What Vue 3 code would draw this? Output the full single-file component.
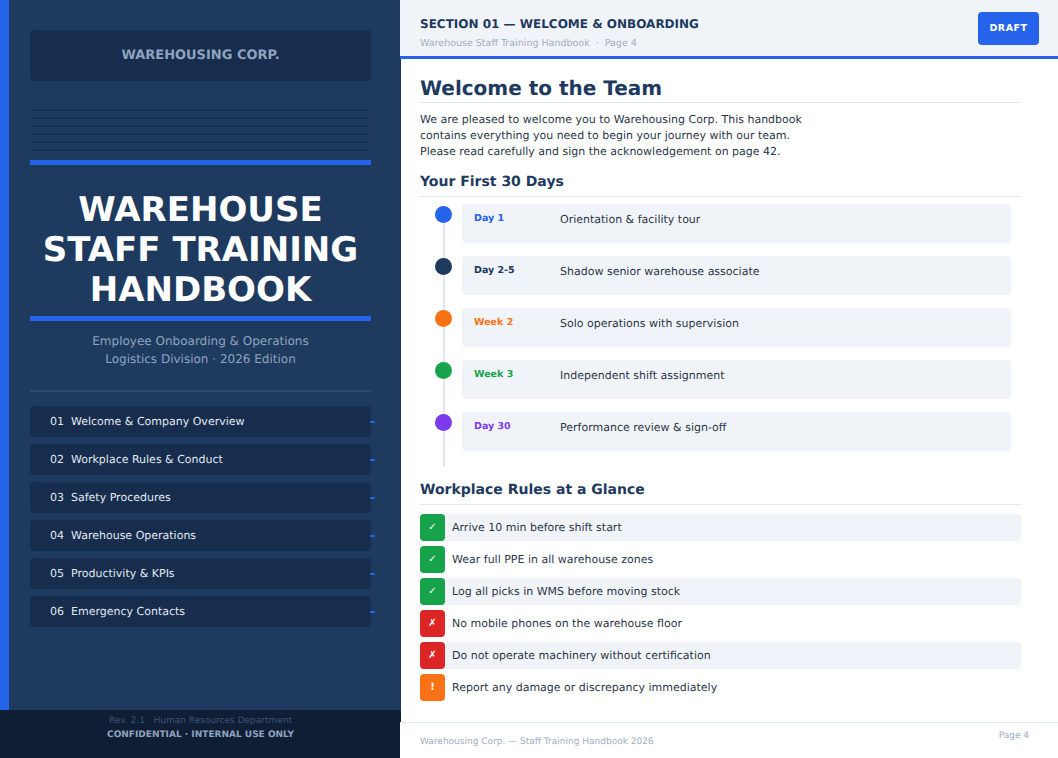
<script setup>
const lines = [1, 2, 3, 4, 5, 6]
const nav = [
  ['01', 'Welcome & Company Overview'],
  ['02', 'Workplace Rules & Conduct'],
  ['03', 'Safety Procedures'],
  ['04', 'Warehouse Operations'],
  ['05', 'Productivity & KPIs'],
  ['06', 'Emergency Contacts'],
]
const days = [
  { when: 'Day 1', what: 'Orientation & facility tour', tone: 'blue' },
  { when: 'Day 2-5', what: 'Shadow senior warehouse associate', tone: 'navy' },
  { when: 'Week 2', what: 'Solo operations with supervision', tone: 'orange' },
  { when: 'Week 3', what: 'Independent shift assignment', tone: 'green' },
  { when: 'Day 30', what: 'Performance review & sign-off', tone: 'purple' },
]
const rules = [
  { mark: '✓', text: 'Arrive 10 min before shift start', tone: 'green' },
  { mark: '✓', text: 'Wear full PPE in all warehouse zones', tone: 'green' },
  { mark: '✓', text: 'Log all picks in WMS before moving stock', tone: 'green' },
  { mark: '✗', text: 'No mobile phones on the warehouse floor', tone: 'red' },
  { mark: '✗', text: 'Do not operate machinery without certification', tone: 'red' },
  { mark: '!', text: 'Report any damage or discrepancy immediately', tone: 'orange' },
]
</script>

<template>
  <div class="page">
    <aside class="cover">
      <div class="cover-top">
        <div class="stripe"></div>
        <div class="cover-body">
          <div class="logo">WAREHOUSING CORP.</div>
          <div class="rack">
            <div v-for="l in lines" :key="l" class="rack-line"></div>
          </div>
          <div class="bar"></div>
          <h1 class="title">WAREHOUSE<br />STAFF TRAINING<br />HANDBOOK</h1>
          <div class="bar"></div>
          <p class="sub">Employee Onboarding &amp; Operations<br />Logistics Division · 2026 Edition</p>
          <div class="divider"></div>
          <nav class="nav">
            <div v-for="n in nav" :key="n[0]" class="nav-item">
              <span class="nav-num">{{ n[0] }}</span>
              <span>{{ n[1] }}</span>
              <i class="tick"></i>
            </div>
          </nav>
        </div>
      </div>
      <div class="cover-foot">
        <div class="rev">Rev. 2.1 · Human Resources Department</div>
        <div class="conf">CONFIDENTIAL · INTERNAL USE ONLY</div>
      </div>
    </aside>

    <main class="sheet">
      <header class="head">
        <div class="head-text">
          <div class="head-title">SECTION 01 — WELCOME &amp; ONBOARDING</div>
          <div class="head-sub">Warehouse Staff Training Handbook &nbsp;·&nbsp; Page 4</div>
        </div>
        <div class="draft">DRAFT</div>
      </header>

      <section class="content">
        <h2 class="h-main">Welcome to the Team</h2>
        <p class="intro">We are pleased to welcome you to Warehousing Corp. This handbook<br />contains everything you need to begin your journey with our team.<br />Please read carefully and sign the acknowledgement on page 42.</p>
        <h3 class="h-sec">Your First 30 Days</h3>
        <div class="timeline">
          <div class="rail"></div>
          <div v-for="d in days" :key="d.when" class="step">
            <div class="dot" :class="d.tone"></div>
            <div class="card">
              <span class="when" :class="d.tone">{{ d.when }}</span>
              <span class="what">{{ d.what }}</span>
            </div>
          </div>
        </div>
        <h3 class="h-sec rules-h">Workplace Rules at a Glance</h3>
        <div class="rules">
          <div v-for="(r, i) in rules" :key="r.text" class="rule" :class="{ odd: i % 2 === 0 }">
            <span class="mark" :class="r.tone">{{ r.mark }}</span>
            <span class="rule-text">{{ r.text }}</span>
          </div>
        </div>
      </section>

      <footer class="foot">
        <span class="foot-left">Warehousing Corp. — Staff Training Handbook 2026</span>
        <span class="foot-right">Page 4</span>
      </footer>
    </main>
  </div>
</template>

<style>
html, body { margin: 0; background: #fff; }
</style>

<style scoped>
.page {
  width: 1058px;
  height: 758px;
  display: flex;
  overflow: hidden;
  font-family: "DejaVu Sans", sans-serif;
  text-rendering: geometricPrecision;
  background: #fff;
}
.cover {
  width: 401px;
  flex: none;
  margin-right: -1px;
  display: flex;
  flex-direction: column;
  background: #1e3a5f;
}
.cover-top { flex: 1; display: flex; min-height: 0; }
.stripe { width: 9px; flex: none; background: #2563eb; }
.cover-body { flex: 1; min-width: 0; padding: 30px 30px 0 21px; }
.logo {
  height: 51px;
  border-radius: 4px;
  background: #162d4d;
  color: #8fa3bf;
  font-size: 13px;
  font-weight: 700;
  display: flex;
  align-items: center;
  justify-content: center;
}
.rack { margin-top: 29px; display: flex; flex-direction: column; gap: 7px; }
.rack-line { height: 1px; background: #162d4d; }
.bar { height: 5px; background: #2563eb; margin-top: 9px; }
.title {
  margin: 25px 0 0;
  color: #fff;
  font-size: 34px;
  line-height: 40px;
  font-weight: 700;
  text-align: center;
}
.title + .bar { margin-top: 6px; }
.sub {
  margin: 11px 0 0;
  color: #8fa3bf;
  font-size: 12px;
  line-height: 18px;
  text-align: center;
}
.divider { height: 2px; background: #2a4a70; margin-top: 22px; }
.nav { margin-top: 14px; display: flex; flex-direction: column; gap: 7px; }
.nav-item {
  position: relative;
  height: 31px;
  border-radius: 4px;
  background: #162d4d;
  color: #e2e8f0;
  font-size: 11px;
  padding-left: 20px;
  display: flex;
  align-items: center;
  box-sizing: border-box;
}
.nav-num { margin-right: 7px; }
.tick { position: absolute; right: -4px; top: 15px; width: 5px; height: 2px; background: #2563eb; }
.cover-foot {
  height: 48px;
  flex: none;
  background: #0f1e35;
  text-align: center;
  padding-top: 4px;
  box-sizing: border-box;
  font-size: 9px;
  line-height: 14px;
}
.rev { color: #3d5475; }
.conf { color: #8fa3bf; font-weight: 700; }

.sheet {
  flex: 1;
  min-width: 0;
  position: relative;
  display: flex;
  flex-direction: column;
}
.head {
  height: 59px;
  box-sizing: border-box;
  flex: none;
  background: #f0f4f8;
  border-bottom: 3px solid #2563eb;
  padding: 0 19px 0 20px;
  display: flex;
  align-items: center;
  justify-content: space-between;
}
.head-text { padding-top: 9px; }
.head-title { color: #1e3a5f; font-size: 12px; font-weight: 700; line-height: 18px; }
.head-sub { color: #a0aec0; font-size: 9.5px; line-height: 14px; margin-top: 4px; }
.draft {
  width: 61px;
  height: 33px;
  border-radius: 4px;
  background: #2563eb;
  color: #fff;
  font-size: 9.5px;
  font-weight: 700;
  letter-spacing: 0.5px;
  display: flex;
  align-items: center;
  justify-content: center;
}
.content { flex: 1; min-height: 0; padding: 17px 37px 0 20px; }
.h-main {
  margin: 0;
  color: #1e3a5f;
  font-size: 20px;
  line-height: 25px;
  padding-bottom: 1px;
  font-weight: 700;
  border-bottom: 1px solid #e2e8f0;
}
.intro { margin: 9px 0 0; color: #2d3748; font-size: 11px; line-height: 16px; }
.h-sec {
  margin: 12px 0 0;
  color: #1e3a5f;
  font-size: 14px;
  line-height: 20px;
  padding-bottom: 4px;
  font-weight: 700;
  border-bottom: 1px solid #e2e8f0;
}
.timeline { position: relative; padding-top: 7px; height: 270px; box-sizing: border-box; }
.rail { position: absolute; left: 23px; top: 18px; bottom: 0; width: 2px; background: #e2e8f0; }
.step { position: relative; display: flex; height: 52px; padding-left: 42px; box-sizing: border-box; }
.dot { position: absolute; left: 15px; top: 2px; width: 17px; height: 17px; border-radius: 50%; }
.dot.blue { background: #2563eb; }
.dot.navy { background: #1e3a5f; }
.dot.orange { background: #f97316; }
.dot.green { background: #16a34a; }
.dot.purple { background: #7c3aed; }
.card {
  width: 549px;
  height: 39px;
  background: #f0f4f8;
  border-radius: 4px;
  display: flex;
  align-items: flex-start;
  padding: 8px 0 0 12px;
  box-sizing: border-box;
  line-height: 14px;
}
.when { width: 86px; flex: none; font-size: 9.5px; font-weight: 700; }
.when.blue { color: #2563eb; }
.when.navy { color: #1e3a5f; }
.when.orange { color: #f97316; }
.when.green { color: #16a34a; }
.when.purple { color: #7c3aed; }
.what { color: #2d3748; font-size: 11px; padding-top: 1px; }
.rules-h { margin-top: 13px; }
.rules { margin-top: 9px; display: flex; flex-direction: column; gap: 5px; }
.rule { height: 27px; display: flex; align-items: center; border-radius: 4px; }
.rule.odd { background: #f0f4f8; }
.mark {
  width: 25px;
  height: 27px;
  flex: none;
  border-radius: 4px;
  color: #fff;
  font-size: 10px;
  font-weight: 700;
  display: flex;
  align-items: center;
  justify-content: center;
}
.mark.green { background: #16a34a; }
.mark.red { background: #dc2626; }
.mark.orange { background: #f97316; }
.rule-text { margin-left: 7px; color: #2d3748; font-size: 11px; }
.foot {
  height: 36px;
  flex: none;
  box-sizing: border-box;
  border-top: 1px solid #e2e8f0;
  background: #fff;
  padding: 0 29px 0 20px;
  display: flex;
  justify-content: space-between;
  color: #a0aec0;
  font-size: 9px;
}
.foot-left { margin-top: 14px; }
.foot-right { margin-top: 8px; }
</style>
